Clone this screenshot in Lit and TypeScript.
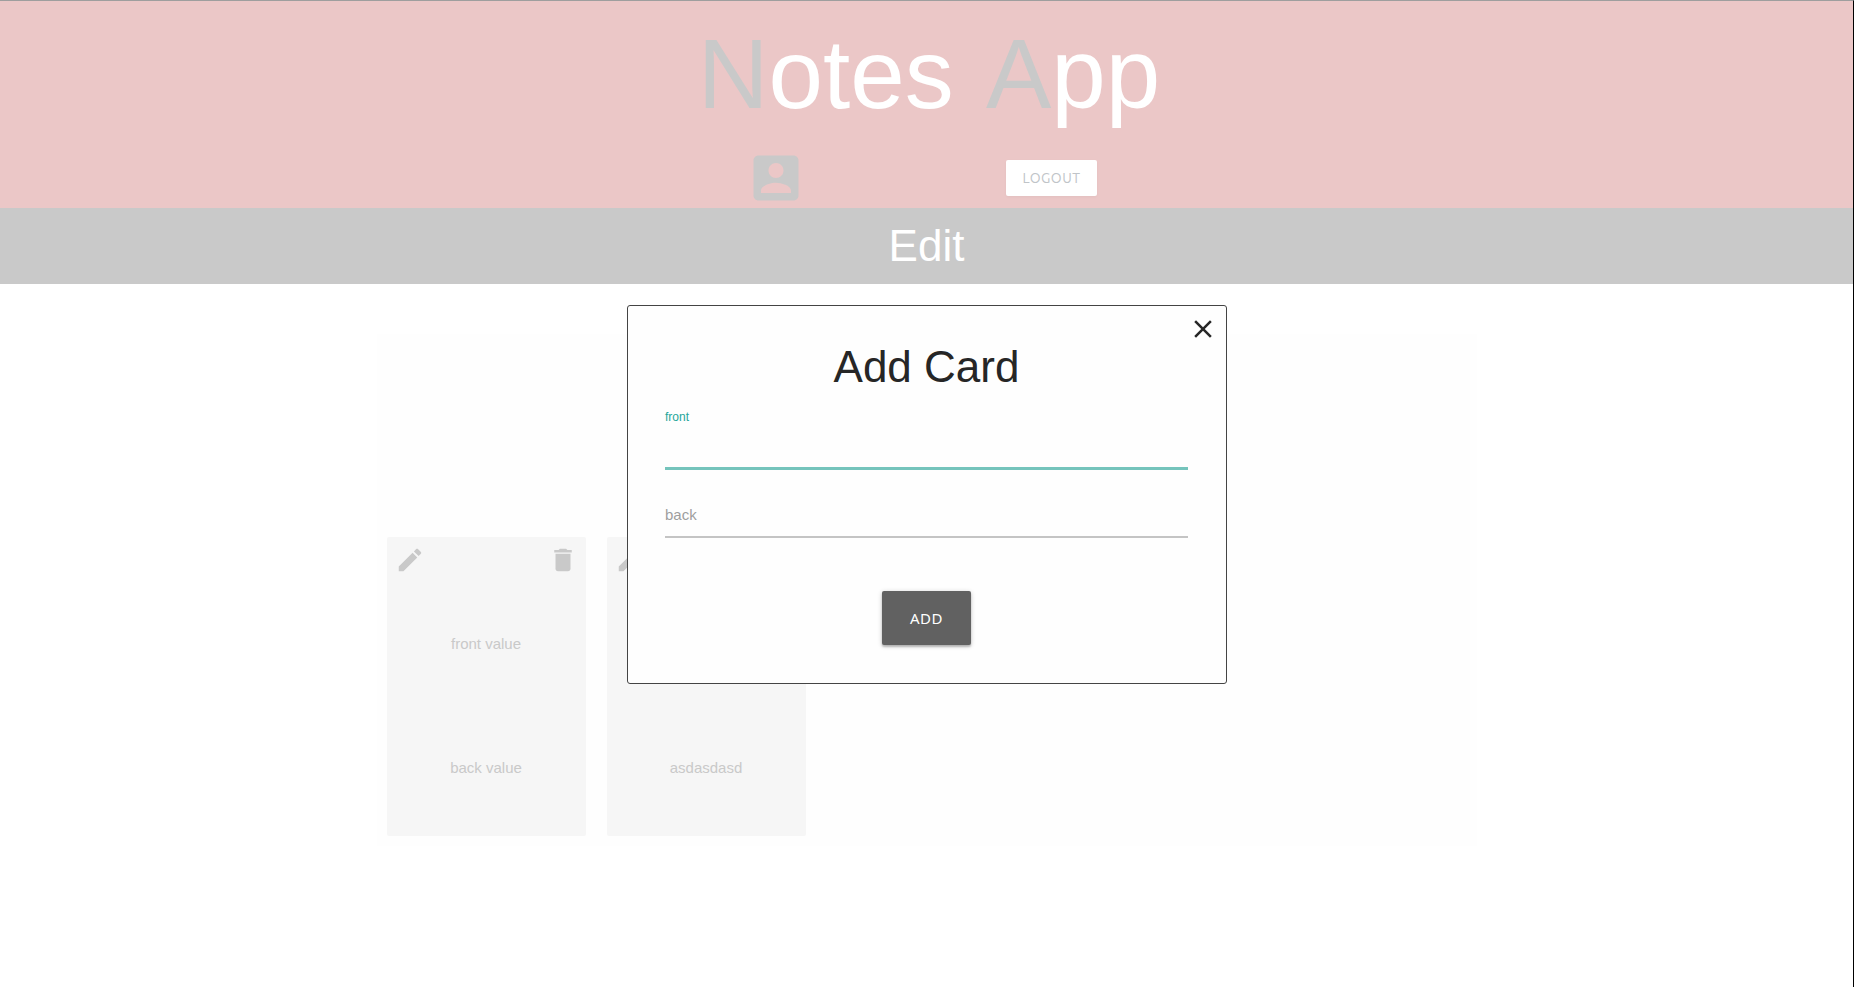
import { LitElement, html, css, svg } from "lit";
import { customElement, property } from "lit/decorators.js";

const icons = {
  account: svg`<path d="M3 5v14c0 1.1.89 2 2 2h14c1.1 0 2-.9 2-2V5c0-1.1-.9-2-2-2H5c-1.11 0-2 .9-2 2zm12 4c0 1.66-1.34 3-3 3s-3-1.34-3-3 1.34-3 3-3 3 1.34 3 3zm-9 8c0-2 4-3.1 6-3.1s6 1.1 6 3.1v1H6v-1z"/>`,
  edit: svg`<path d="M3 17.25V21h3.75L17.81 9.94l-3.75-3.75L3 17.25zM20.71 7.04c.39-.39.39-1.02 0-1.41l-2.34-2.34c-.39-.39-1.02-.39-1.41 0l-1.83 1.83 3.75 3.75 1.83-1.83z"/>`,
  trash: svg`<path d="M6 19c0 1.1.9 2 2 2h8c1.1 0 2-.9 2-2V7H6v12zM19 4h-3.5l-1-1h-5l-1 1H5v2h14V4z"/>`,
  close: svg`<path d="M19 6.41L17.59 5 12 10.59 6.41 5 5 6.41 10.59 12 5 17.59 6.41 19 12 13.41 17.59 19 19 17.59 13.41 12z"/>`,
};

@customElement("app-icon")
export class AppIcon extends LitElement {
  @property() name: keyof typeof icons = "edit";

  static styles = css`
    :host {
      display: block;
      width: 30px;
      height: 30px;
    }
    .glyph {
      display: block;
      width: 100%;
      height: 100%;
      fill: currentColor;
    }
  `;

  render() {
    return html`<svg class="glyph" viewBox="0 0 24 24" aria-hidden="true">${icons[this.name]}</svg>`;
  }
}

@customElement("note-card")
export class NoteCard extends LitElement {
  @property() front = "";
  @property() back = "";

  static styles = css`
    :host {
      display: flex;
      flex-direction: column;
      box-sizing: border-box;
      width: 199px;
      height: 299px;
      padding: 8px 8px 6px;
      border-radius: 2px;
      background: #f6f6f6;
      color: #c9c9c9;
      font-size: 15px;
    }
    .tools {
      display: flex;
      justify-content: space-between;
      margin-bottom: auto;
    }
    .tool {
      padding: 0;
      border: 0;
      background: none;
      color: inherit;
    }
    .side {
      display: flex;
      height: 124px;
      align-items: center;
      justify-content: center;
    }
  `;

  render() {
    return html`
      <div class="tools">
        <button class="tool" aria-label="Edit card"><app-icon name="edit"></app-icon></button>
        <button class="tool" aria-label="Delete card"><app-icon name="trash"></app-icon></button>
      </div>
      <div class="side">${this.front}</div>
      <div class="side">${this.back}</div>
    `;
  }
}

@customElement("app-root")
export class AppRoot extends LitElement {
  private cards = [
    { front: "front value", back: "back value" },
    { front: "asdasd", back: "asdasdasd" },
  ];

  static styles = css`
    :host {
      display: block;
      box-sizing: border-box;
      min-height: 100vh;
      border-top: 1px solid #9e9e9e;
      border-right: 1px solid #000;
      background: #fff;
      font-family: "Liberation Sans", Arial, sans-serif;
      line-height: 1.5;
    }
    .header {
      display: flex;
      flex-direction: column;
      align-items: center;
      background: #ebc7c7;
    }
    .brand {
      margin: 0;
      padding: 18px 0 18px 5px;
      color: #fff;
      font-size: 98px;
      font-weight: 400;
      font-kerning: none;
      line-height: 110px;
    }
    .initial {
      color: #c9c9c9;
    }
    .initial + .initial {
      margin-left: 5px;
    }
    .actions {
      display: flex;
      align-items: center;
      justify-content: space-around;
      box-sizing: border-box;
      width: 560px;
      max-width: 100%;
      padding: 1px 10px 0 0;
    }
    .account {
      color: #c9c9c9;
    }
    .account-icon {
      width: 60px;
      height: 60px;
    }
    .logout {
      height: 36px;
      padding: 0 16px;
      border: 0;
      border-radius: 2px;
      background: #fff;
      box-shadow: 0 1px 3px rgba(0, 0, 0, 0.04);
      color: #c0c4c8;
      font: 14px/36px Ubuntu, "Noto Sans", sans-serif;
      letter-spacing: 0.5px;
      text-transform: uppercase;
    }
    .bar {
      margin: 0;
      background: #c9c9c9;
      color: #fff;
      font-size: 44px;
      font-weight: 400;
      line-height: 76px;
      text-align: center;
    }
    .panel {
      display: flex;
      align-items: flex-end;
      gap: 21px;
      box-sizing: border-box;
      width: 1100px;
      max-width: 100%;
      min-height: 512px;
      margin: 50px auto 0;
      padding: 10px;
      background: #fefefe;
    }
    .modal {
      position: absolute;
      top: 305px;
      left: 50%;
      display: flex;
      flex-direction: column;
      align-items: center;
      box-sizing: border-box;
      width: 600px;
      margin: 0 0 0 -300px;
      padding: 31px 38px 38px 37px;
      border: 1px solid #444;
      border-radius: 3px;
      background: #fefefe;
      color: #262626;
    }
    .close {
      position: absolute;
      top: 8px;
      right: 8px;
      padding: 0;
      border: 0;
      background: none;
      color: inherit;
    }
    .title {
      margin: 0;
      font-size: 44px;
      font-weight: 400;
      line-height: 60px;
    }
    .form {
      display: flex;
      flex-direction: column;
      align-items: center;
      width: 100%;
    }
    .field {
      display: flex;
      flex-direction: column;
      width: 100%;
      height: 68px;
      color: #9e9e9e;
      font-size: 15px;
      line-height: 20px;
    }
    .field-active {
      height: 73px;
      padding-top: 10px;
      box-sizing: border-box;
    }
    .field-active .label {
      color: #26a69a;
      font-size: 12px;
    }
    .field-resting {
      justify-content: flex-end;
    }
    .input {
      box-sizing: border-box;
      width: 100%;
      height: 43px;
      padding: 0;
      border: 0;
      border-bottom: 3px solid #75c4bc;
      outline: 0;
      background: none;
      font: inherit;
      caret-color: transparent;
    }
    .field-resting .input {
      height: 13px;
      border-bottom: 2px solid #c4c4c4;
    }
    .add {
      height: 54px;
      margin-top: 53px;
      padding: 0 28px;
      border: 0;
      border-radius: 2px;
      background: #616161;
      box-shadow: 0 2px 2px rgba(0, 0, 0, 0.2), 0 1px 5px rgba(0, 0, 0, 0.2);
      color: #fff;
      font: 15px/54px "Noto Sans", sans-serif;
      letter-spacing: 0.5px;
      text-transform: uppercase;
    }
  `;

  render() {
    return html`
      <header class="header">
        <h1 class="brand"><span class="initial">N</span>otes <span class="initial">A</span>pp</h1>
        <div class="actions">
          <a class="account" href="#" aria-label="Account"><app-icon class="account-icon" name="account"></app-icon></a>
          <button class="logout">Logout</button>
        </div>
      </header>
      <h2 class="bar">Edit</h2>
      <main class="panel">
        ${this.cards.map((c) => html`<note-card .front=${c.front} .back=${c.back}></note-card>`)}
      </main>
      <section class="modal" role="dialog" aria-labelledby="title">
        <button class="close" aria-label="Close"><app-icon name="close"></app-icon></button>
        <h3 class="title" id="title">Add Card</h3>
        <form class="form">
          <div class="field field-active">
            <label class="label" for="front">front</label>
            <input class="input" id="front" type="text" />
          </div>
          <div class="field field-resting">
            <label class="label" for="back">back</label>
            <input class="input" id="back" type="text" />
          </div>
          <button class="add" type="button">Add</button>
        </form>
      </section>
    `;
  }
}
